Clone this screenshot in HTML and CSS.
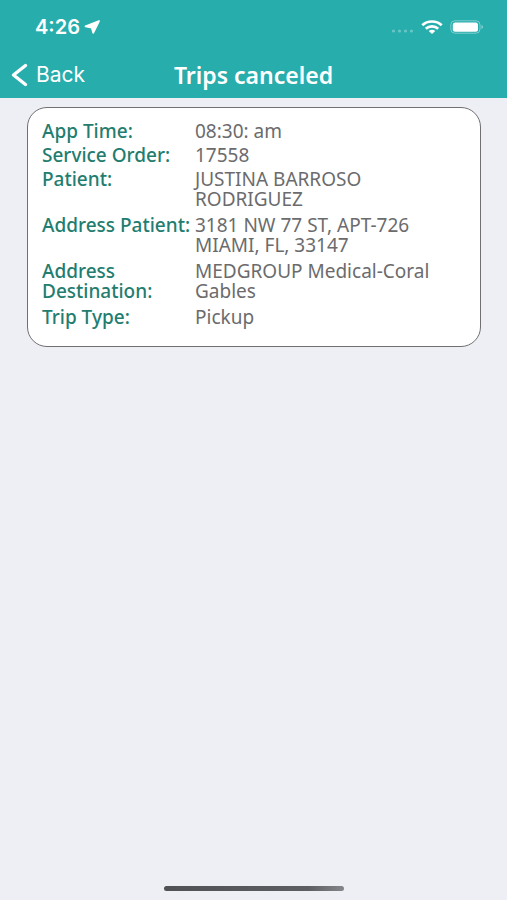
FILE: index.html
```html
<!DOCTYPE html>
<html lang="en">
<head>
<meta charset="utf-8">
<meta name="viewport" content="width=device-width, initial-scale=1">
<title>Trips canceled</title>
<link rel="stylesheet" href="styles.css">
</head>
<body>
<header class="header">
  <div class="status">
    <div class="status-side">
      <span class="clock">4:26</span>
      <svg class="location" width="17" height="14" viewBox="0 0 17 14" aria-hidden="true"><path d="M15 1 1.500 6.300 7.800 7.700 9.200 12.800z" fill="currentColor" stroke="currentColor" stroke-width="1.800" stroke-linejoin="round"/></svg>
    </div>
    <div class="status-side">
      <svg class="signal" width="24" height="4" viewBox="0 0 24 4" aria-hidden="true"><g fill="#fff" opacity=".3"><circle cx="2.500" cy="2" r="1.600"/><circle cx="8.500" cy="2" r="1.600"/><circle cx="14.500" cy="2" r="1.600"/><circle cx="20.500" cy="2" r="1.600"/></g></svg>
      <svg class="wifi" width="22" height="14" viewBox="0 0 22 14" aria-hidden="true"><g fill="none" stroke="#fff" stroke-width="2.700"><path d="M1.300 5.300C6.500.2 15.500.2 20.700 5.300"/><path d="M4.800 8.700c3.400-3.200 9-3.200 12.400 0"/></g><path d="M7.700 11.100c1.800-1.700 4.800-1.700 6.600 0L11 14z" fill="#fff"/></svg>
      <svg class="battery" width="34" height="14" viewBox="0 0 34 14" aria-hidden="true"><rect x=".8" y=".8" width="29.200" height="12.400" rx="4" fill="none" stroke="#fff" stroke-opacity=".4"/><rect x="2.800" y="2.500" width="25.200" height="9.200" rx="2.500" fill="#fff"/><path d="M31.500 5v4c1.900-.6 1.900-3.400 0-4z" fill="#fff" opacity=".5"/></svg>
    </div>
  </div>
  <nav class="nav">
    <button class="back" type="button">
      <svg width="17" height="24" viewBox="0 0 17 24" aria-hidden="true"><path d="M14.500 2.500 2.500 12l12 9.500" fill="none" stroke="currentColor" stroke-width="3.400" stroke-linecap="round" stroke-linejoin="round"/></svg>
      <span>Back</span>
    </button>
    <h1 class="title">Trips canceled</h1>
  </nav>
</header>
<main class="content">
  <dl class="card">
    <div class="row"><dt>App Time:</dt><dd>08:30: am</dd></div>
    <div class="row"><dt>Service Order:</dt><dd>17558</dd></div>
    <div class="row row-long"><dt>Patient:</dt><dd>JUSTINA BARROSO RODRIGUEZ</dd></div>
    <div class="row row-long"><dt>Address Patient:</dt><dd>3181 NW 77 ST, APT-726 MIAMI, FL, 33147</dd></div>
    <div class="row row-long"><dt>Address Destination:</dt><dd>MEDGROUP Medical-Coral Gables</dd></div>
    <div class="row"><dt>Trip Type:</dt><dd>Pickup</dd></div>
  </dl>
</main>
<footer class="home"><div class="home-bar"></div></footer>
</body>
</html>
```
FILE: styles.css
```css
* {
  box-sizing: border-box;
}

body {
  display: flex;
  flex-direction: column;
  min-height: 100vh;
  margin: 0;
  background: #edeff4;
  font-family: "Noto Sans", sans-serif;
}

.header {
  background: #28adad;
  color: #fff;
}

.status {
  display: flex;
  justify-content: space-between;
  padding: 16px 23px 0 35px;
  height: 52px;
}

.status-side {
  display: flex;
  align-items: center;
  height: 22px;
}

.clock {
  font: 600 20px/22px Inter, sans-serif;
}

.location {
  margin-left: 4px;
}

.signal {
  margin: 8px 6px 0 0;
}

.wifi {
  margin-right: 7px;
}

.nav {
  display: grid;
  grid-template-columns: 1fr auto 1fr;
  align-items: center;
  height: 46px;
  padding: 0 11px;
}

.back {
  display: flex;
  align-items: center;
  justify-self: start;
  gap: 8px;
  padding: 0;
  border: 0;
  background: none;
  color: inherit;
  font: 400 21px/24px Inter, sans-serif;
}

.title {
  margin: 0;
  font-size: 23px;
  font-weight: 600;
  line-height: 32px;
}

.content {
  flex: 1;
  padding: 9px 26px 0 27px;
}

.card {
  margin: 0;
  padding: 13px 13px 15px 14px;
  border: 1px solid #707072;
  border-radius: 20px;
  background: #fff;
  font-size: 19px;
  line-height: 20px;
}

.row {
  display: grid;
  grid-template-columns: 36% 1fr;
  margin-bottom: 4px;
}

.row-long {
  margin-bottom: 6px;
}

dt {
  color: #237d6f;
  font-weight: 500;
}

dd {
  margin: 0;
  padding-right: 24px;
  color: #6b6b6d;
}

.home {
  display: flex;
  justify-content: center;
  padding-bottom: 9px;
}

.home-bar {
  width: 180px;
  height: 5px;
  border-radius: 3px;
  background: linear-gradient(90deg, #505155, #5d5e62 80%, #85868a);
}
```
